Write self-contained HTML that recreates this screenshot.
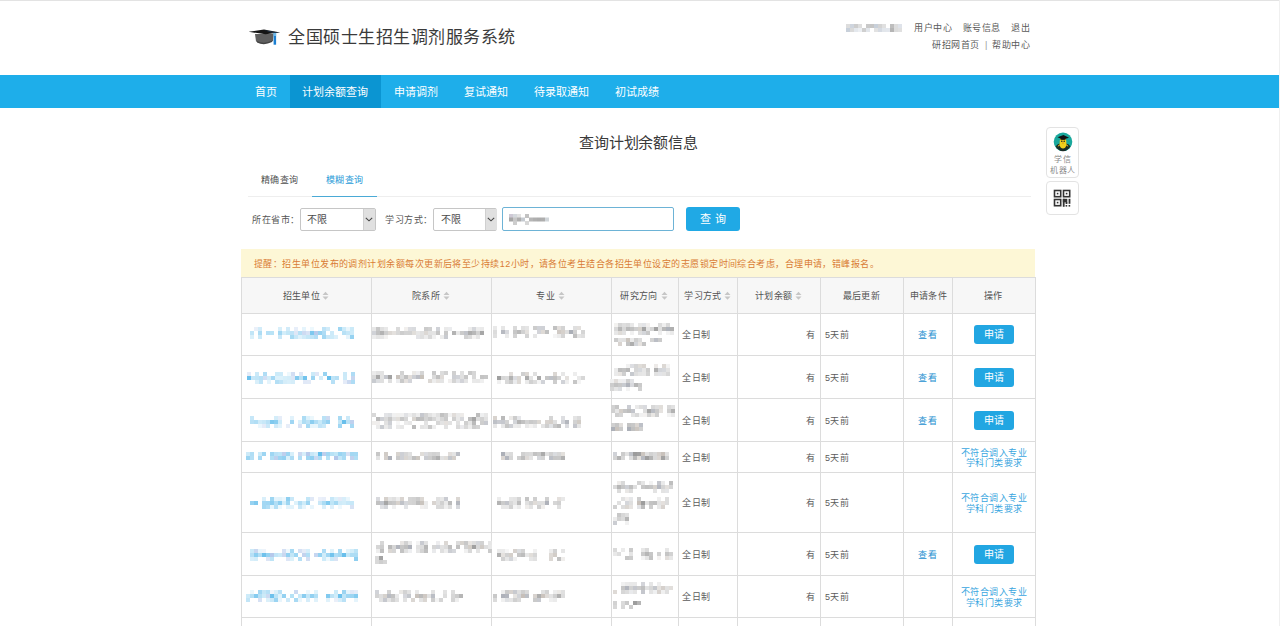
<!DOCTYPE html>
<html lang="zh-CN"><head><meta charset="utf-8">
<style>
html,body{margin:0;padding:0;}
body{width:1280px;height:626px;overflow:hidden;position:relative;background:#fff;font-family:"Liberation Sans",sans-serif;color:#333;}
.a{position:absolute;white-space:nowrap;}
.topline{left:0;top:0;width:1280px;height:1px;background:#e3e3e3;}
.rightline{left:1279px;top:0;width:1px;height:626px;background:#f0f0f0;}
.nav{left:0;top:75px;width:1279px;height:33px;background:#1eaeea;}
.nav-act{left:290px;top:75px;width:91px;height:33px;background:#0b95d2;}
.nt{top:87px;font-size:11px;line-height:11px;color:#fff;}
.hr{font-size:9px;letter-spacing:0.5px;line-height:10px;color:#5a5a5a;}
.blur{position:absolute;border-radius:1px;}
.tb{position:absolute;background:#dcdcdc;}
.th{font-size:9px;letter-spacing:0.4px;line-height:10px;color:#525252;}
.td{font-size:9px;letter-spacing:0.4px;line-height:10px;color:#5c5c5c;}
.btn{position:absolute;background:#22a6e2;border-radius:3px;color:#fff;font-size:10px;line-height:19px;text-align:center;}
.lnk{color:#2590d0;font-size:9px;letter-spacing:0.5px;line-height:10px;}
.sort{position:absolute;width:6px;height:9px;}
.m rect{width:4px;height:4px;}
.m{filter:blur(0.35px);}
</style></head>
<body>
<div class="a topline"></div>
<div class="a rightline"></div>

<!-- header -->
<svg class="a" style="left:248px;top:28px" width="34" height="18" viewBox="0 0 34 18">
  <path d="M7,6 L25.5,6 L25,13 Q16,17.5 8,13.5 Z" fill="#5f5f5f"/>
  <path d="M9,13 Q16,16.5 24.5,12.5 L24,14 Q16,18 9,14.5 Z" fill="#444"/>
  <polygon points="0.6,3.8 16,1.4 32.2,4.6 17.5,6.3" fill="#151515"/>
  <polygon points="16,2.2 31,4.6 26,5.2" fill="#2a4a6a" opacity=".6"/>
  <rect x="25.6" y="5" width="2.5" height="11.7" fill="#1b7fd2"/>
  <rect x="25.6" y="5" width="2.5" height="3" fill="#6fb8e8"/>
</svg>
<div class="a" style="left:288px;top:28.5px;font-size:17px;letter-spacing:0.5px;line-height:18px;color:#3a3a3a">全国硕士生招生调剂服务系统</div>

<svg class="a m" style="left:846px;top:24px" width="56" height="8"><rect x="0" y="0" fill="#dddddd"/><rect x="4" y="0" fill="#cfd5de"/><rect x="8" y="0" fill="#cdcdcd"/><rect x="12" y="0" fill="#dedede"/><rect x="20" y="0" fill="#c9c9c9"/><rect x="24" y="0" fill="#c6c6c6"/><rect x="28" y="0" fill="#c8d0da"/><rect x="32" y="0" fill="#d4d4d4"/><rect x="36" y="0" fill="#e0e0e0"/><rect x="44" y="0" fill="#bebebe"/><rect x="48" y="0" fill="#dddddd"/><rect x="52" y="0" fill="#dfe3ea"/><rect x="0" y="4" fill="#c8d0da"/><rect x="4" y="4" fill="#dadada"/><rect x="8" y="4" fill="#e4e8ed"/><rect x="12" y="4" fill="#eceff3"/><rect x="16" y="4" fill="#cfcfcf"/><rect x="20" y="4" fill="#e2e6eb"/><rect x="28" y="4" fill="#e2e2e2"/><rect x="32" y="4" fill="#d5dae2"/><rect x="36" y="4" fill="#e2e6eb"/><rect x="40" y="4" fill="#e3e7ed"/><rect x="44" y="4" fill="#b5b5b5"/><rect x="48" y="4" fill="#dcdcdc"/><rect x="52" y="4" fill="#e0e0e0"/></svg>
<div class="a hr" style="left:914px;top:23px">用户中心</div>
<div class="a hr" style="left:962.5px;top:23px">账号信息</div>
<div class="a hr" style="left:1011px;top:23px">退出</div>
<div class="a hr" style="left:932px;top:40px">研招网首页</div>
<div class="a hr" style="left:985px;top:40px;color:#999">|</div>
<div class="a hr" style="left:992px;top:40px">帮助中心</div>

<!-- nav -->
<div class="a nav"></div>
<div class="a nav-act"></div>
<div class="a nt" style="left:255px">首页</div>
<div class="a nt" style="left:302px">计划余额查询</div>
<div class="a nt" style="left:394px">申请调剂</div>
<div class="a nt" style="left:464px">复试通知</div>
<div class="a nt" style="left:534px">待录取通知</div>
<div class="a nt" style="left:615px">初试成绩</div>

<!-- title -->
<div class="a" style="left:579px;top:135px;font-size:15px;letter-spacing:-0.15px;line-height:15px;color:#3a3a3a">查询计划余额信息</div>

<!-- tabs -->
<div class="a" style="left:261px;top:174.5px;font-size:9px;letter-spacing:0.33px;line-height:10px;color:#505050">精确查询</div>
<div class="a" style="left:326px;top:174.5px;font-size:9px;letter-spacing:0.33px;line-height:10px;color:#2a9bd8">模糊查询</div>
<div class="a" style="left:248px;top:196px;width:783px;height:1px;background:#eee"></div>
<div class="a" style="left:312px;top:196px;width:65px;height:1px;background:#4aaad6"></div>

<!-- form -->
<div class="a" style="left:252px;top:215px;font-size:9px;letter-spacing:0.5px;line-height:10px;color:#555">所在省市：</div>
<div class="a" style="left:300px;top:208px;width:74px;height:21px;border:1px solid #c6c6c6;border-radius:2px;background:#fff"></div>
<div class="a" style="left:363px;top:209px;width:11px;height:21px;background:#e0e0e0;border-left:1px solid #d0d0d0"></div>
<svg class="a" style="left:365px;top:217px" width="8" height="5" viewBox="0 0 8 5"><polyline points="0.8,0.8 4,3.8 7.2,0.8" fill="none" stroke="#444" stroke-width="1.1"/></svg>
<div class="a" style="left:307px;top:215px;font-size:10px;line-height:10px;color:#4a4a4a">不限</div>
<div class="a" style="left:385px;top:215px;font-size:9px;letter-spacing:0.5px;line-height:10px;color:#555">学习方式：</div>
<div class="a" style="left:433px;top:208px;width:62px;height:21px;border:1px solid #c6c6c6;border-radius:2px;background:#fff"></div>
<div class="a" style="left:485px;top:209px;width:11px;height:21px;background:#e0e0e0;border-left:1px solid #d0d0d0"></div>
<svg class="a" style="left:487px;top:217px" width="8" height="5" viewBox="0 0 8 5"><polyline points="0.8,0.8 4,3.8 7.2,0.8" fill="none" stroke="#444" stroke-width="1.1"/></svg>
<div class="a" style="left:441px;top:215px;font-size:10px;line-height:10px;color:#4a4a4a">不限</div>
<div class="a" style="left:502px;top:207px;width:170px;height:22px;border:1px solid #6db3d6;border-radius:2px;background:#fff"></div>
<svg class="a m" style="left:509px;top:214px" width="40" height="11"><rect x="0" y="0.0" fill="#cec9d5"/><rect x="4" y="0.0" fill="#d4d9dd"/><rect x="8" y="0.0" fill="#e2e2e2"/><rect x="16" y="0.0" fill="#c2c2c2"/><rect x="0" y="3.5" fill="#a6a6a6"/><rect x="4" y="3.5" fill="#c7c7c7"/><rect x="8" y="3.5" fill="#aeaeae"/><rect x="12" y="3.5" fill="#c5cad0"/><rect x="20" y="3.5" fill="#b6b6b6"/><rect x="24" y="3.5" fill="#afafaf"/><rect x="28" y="3.5" fill="#acacac"/><rect x="32" y="3.5" fill="#aeaeae"/><rect x="36" y="3.5" fill="#d0d5d9"/><rect x="4" y="7.0" fill="#cdcdcd"/><rect x="16" y="7.0" fill="#d7d7d7"/></svg>
<div class="btn" style="left:686px;top:207px;width:54px;height:24px;line-height:24px;font-size:11px;background:#20a9e5">查 询</div>

<!-- notice -->
<div class="a" style="left:241px;top:249px;width:794px;height:28px;background:#fdf7d6"></div>
<div class="a" style="left:254px;top:259.5px;font-size:9px;letter-spacing:0.45px;line-height:9px;color:#d97b35">提醒：招生单位发布的调剂计划余额每次更新后将至少持续12小时，请各位考生结合各招生单位设定的志愿锁定时间综合考虑，合理申请，错峰报名。</div>

<!-- table -->
<div class="a" style="left:241px;top:277px;width:794px;height:36px;background:#f7f7f7"></div>
<div class="tb" style="left:241px;top:277px;width:1px;height:349px"></div>
<div class="tb" style="left:371px;top:277px;width:1px;height:349px"></div>
<div class="tb" style="left:491px;top:277px;width:1px;height:349px"></div>
<div class="tb" style="left:611px;top:277px;width:1px;height:349px"></div>
<div class="tb" style="left:678px;top:277px;width:1px;height:349px"></div>
<div class="tb" style="left:737px;top:277px;width:1px;height:349px"></div>
<div class="tb" style="left:820px;top:277px;width:1px;height:349px"></div>
<div class="tb" style="left:903px;top:277px;width:1px;height:349px"></div>
<div class="tb" style="left:952px;top:277px;width:1px;height:349px"></div>
<div class="tb" style="left:1035px;top:277px;width:1px;height:349px"></div>
<div class="tb" style="left:241px;top:277px;width:795px;height:1px"></div>
<div class="tb" style="left:241px;top:313px;width:795px;height:1px"></div>
<div class="tb" style="left:241px;top:355px;width:795px;height:1px"></div>
<div class="tb" style="left:241px;top:398px;width:795px;height:1px"></div>
<div class="tb" style="left:241px;top:441px;width:795px;height:1px"></div>
<div class="tb" style="left:241px;top:472px;width:795px;height:1px"></div>
<div class="tb" style="left:241px;top:532px;width:795px;height:1px"></div>
<div class="tb" style="left:241px;top:575px;width:795px;height:1px"></div>
<div class="tb" style="left:241px;top:617px;width:795px;height:1px"></div>
<div class="a th" style="left:282.7px;top:291px">招生单位</div>
<div class="a th" style="left:411.8px;top:291px">院系所</div>
<div class="a th" style="left:536.4px;top:291px">专业</div>
<div class="a th" style="left:620.3px;top:291px">研究方向</div>
<div class="a th" style="left:684.3px;top:291px">学习方式</div>
<div class="a th" style="left:754.9px;top:291px">计划余额</div>
<div class="a th" style="left:842.5px;top:291px">最后更新</div>
<div class="a th" style="left:909.6px;top:291px">申请条件</div>
<div class="a th" style="left:983.8px;top:291px">操作</div>
<svg class="a" style="left:322.0px;top:291px" width="7" height="10" viewBox="0 0 7 10"><polygon points="0.5,4 3.5,0.8 6.5,4" fill="#c6c6c6"/><polygon points="0.5,5.6 3.5,8.8 6.5,5.6" fill="#c6c6c6"/></svg>
<svg class="a" style="left:442.5px;top:291px" width="7" height="10" viewBox="0 0 7 10"><polygon points="0.5,4 3.5,0.8 6.5,4" fill="#c6c6c6"/><polygon points="0.5,5.6 3.5,8.8 6.5,5.6" fill="#c6c6c6"/></svg>
<svg class="a" style="left:557.5px;top:291px" width="7" height="10" viewBox="0 0 7 10"><polygon points="0.5,4 3.5,0.8 6.5,4" fill="#c6c6c6"/><polygon points="0.5,5.6 3.5,8.8 6.5,5.6" fill="#c6c6c6"/></svg>
<svg class="a" style="left:660.5px;top:291px" width="7" height="10" viewBox="0 0 7 10"><polygon points="0.5,4 3.5,0.8 6.5,4" fill="#c6c6c6"/><polygon points="0.5,5.6 3.5,8.8 6.5,5.6" fill="#c6c6c6"/></svg>
<svg class="a" style="left:724.0px;top:291px" width="7" height="10" viewBox="0 0 7 10"><polygon points="0.5,4 3.5,0.8 6.5,4" fill="#c6c6c6"/><polygon points="0.5,5.6 3.5,8.8 6.5,5.6" fill="#c6c6c6"/></svg>
<svg class="a" style="left:794.5px;top:291px" width="7" height="10" viewBox="0 0 7 10"><polygon points="0.5,4 3.5,0.8 6.5,4" fill="#c6c6c6"/><polygon points="0.5,5.6 3.5,8.8 6.5,5.6" fill="#c6c6c6"/></svg>
<svg class="a m" style="left:250px;top:327px" width="104" height="12"><rect x="4" y="0" fill="#eaf0f9"/><rect x="8" y="0" fill="#d2ecf9"/><rect x="28" y="0" fill="#d8effa"/><rect x="36" y="0" fill="#d1ebf9"/><rect x="44" y="0" fill="#e7eef9"/><rect x="52" y="0" fill="#e5f4fc"/><rect x="60" y="0" fill="#edf8fd"/><rect x="72" y="0" fill="#bee3f7"/><rect x="76" y="0" fill="#d0ebf9"/><rect x="88" y="0" fill="#9ed6f2"/><rect x="92" y="0" fill="#cdebf9"/><rect x="96" y="0" fill="#eaf6fc"/><rect x="100" y="0" fill="#cbeaf8"/><rect x="0" y="4" fill="#c1e5f7"/><rect x="8" y="4" fill="#addcf4"/><rect x="16" y="4" fill="#b6e0f6"/><rect x="20" y="4" fill="#b9e3f6"/><rect x="28" y="4" fill="#a3d8f3"/><rect x="32" y="4" fill="#d4eefa"/><rect x="36" y="4" fill="#c3e7f7"/><rect x="40" y="4" fill="#bfe3f7"/><rect x="44" y="4" fill="#dfe7f6"/><rect x="48" y="4" fill="#b7e0f6"/><rect x="52" y="4" fill="#cedbf2"/><rect x="56" y="4" fill="#d9e3f5"/><rect x="60" y="4" fill="#7ec8ee"/><rect x="64" y="4" fill="#b8caeb"/><rect x="68" y="4" fill="#97d2f1"/><rect x="72" y="4" fill="#aedcf5"/><rect x="80" y="4" fill="#cdeaf9"/><rect x="92" y="4" fill="#b8e1f6"/><rect x="96" y="4" fill="#c6e7f8"/><rect x="100" y="4" fill="#ceebf9"/><rect x="0" y="8" fill="#daf0fa"/><rect x="8" y="8" fill="#cbeaf8"/><rect x="28" y="8" fill="#c9e8f8"/><rect x="40" y="8" fill="#a7daf3"/><rect x="44" y="8" fill="#c9e8f8"/><rect x="48" y="8" fill="#e0f2fb"/><rect x="52" y="8" fill="#d1ebf9"/><rect x="56" y="8" fill="#c5e7f7"/><rect x="60" y="8" fill="#c0e4f7"/><rect x="64" y="8" fill="#b3def5"/><rect x="72" y="8" fill="#a4d8f3"/><rect x="76" y="8" fill="#cae8f8"/><rect x="80" y="8" fill="#cdebf9"/><rect x="84" y="8" fill="#dcf0fa"/><rect x="96" y="8" fill="#e5f4fc"/><rect x="100" y="8" fill="#96d2f1"/></svg>
<svg class="a m" style="left:372px;top:327px" width="112" height="12"><rect x="0" y="0" fill="#e7e7e7"/><rect x="4" y="0" fill="#c7c7c7"/><rect x="8" y="0" fill="#e0e0e0"/><rect x="12" y="0" fill="#e8e8e8"/><rect x="24" y="0" fill="#dadada"/><rect x="32" y="0" fill="#f1efed"/><rect x="36" y="0" fill="#dcdde1"/><rect x="40" y="0" fill="#d9dbde"/><rect x="52" y="0" fill="#cbcbcb"/><rect x="56" y="0" fill="#d0d0d0"/><rect x="64" y="0" fill="#d0d2d7"/><rect x="72" y="0" fill="#eaeaea"/><rect x="76" y="0" fill="#ebecee"/><rect x="96" y="0" fill="#ececec"/><rect x="100" y="0" fill="#d5d7db"/><rect x="104" y="0" fill="#ededed"/><rect x="108" y="0" fill="#eaeaea"/><rect x="0" y="4" fill="#d0d2d7"/><rect x="4" y="4" fill="#c1c1c1"/><rect x="8" y="4" fill="#b3b3b3"/><rect x="12" y="4" fill="#cecece"/><rect x="16" y="4" fill="#dcd8d4"/><rect x="20" y="4" fill="#e4e1de"/><rect x="24" y="4" fill="#d8d8d8"/><rect x="28" y="4" fill="#cdcdcd"/><rect x="32" y="4" fill="#d3d3d3"/><rect x="36" y="4" fill="#d2d2d2"/><rect x="40" y="4" fill="#e1deda"/><rect x="44" y="4" fill="#e7e7e7"/><rect x="48" y="4" fill="#e1e1e1"/><rect x="52" y="4" fill="#dcd8d4"/><rect x="56" y="4" fill="#e2e2e2"/><rect x="60" y="4" fill="#e4e4e4"/><rect x="64" y="4" fill="#c5c5c5"/><rect x="72" y="4" fill="#c9c9c9"/><rect x="80" y="4" fill="#b3b3b3"/><rect x="84" y="4" fill="#e8e8e8"/><rect x="88" y="4" fill="#cbcbcb"/><rect x="92" y="4" fill="#c2c4ca"/><rect x="96" y="4" fill="#adadad"/><rect x="100" y="4" fill="#b8b8b8"/><rect x="104" y="4" fill="#d2d2d2"/><rect x="108" y="4" fill="#a7a7a7"/><rect x="0" y="8" fill="#ececec"/><rect x="4" y="8" fill="#e4e4e4"/><rect x="8" y="8" fill="#e6e6e6"/><rect x="12" y="8" fill="#f3f2f1"/><rect x="44" y="8" fill="#e3e4e7"/><rect x="48" y="8" fill="#dfdfdf"/><rect x="52" y="8" fill="#ececec"/><rect x="56" y="8" fill="#d9d9d9"/><rect x="60" y="8" fill="#f1f1f1"/><rect x="68" y="8" fill="#ececec"/><rect x="72" y="8" fill="#c9cbd0"/><rect x="92" y="8" fill="#d2d2d2"/><rect x="96" y="8" fill="#dbdbdb"/><rect x="100" y="8" fill="#f4f3f2"/><rect x="104" y="8" fill="#e6e6e6"/></svg>
<svg class="a m" style="left:493px;top:326px" width="92" height="12"><rect x="0" y="0" fill="#e9e9e9"/><rect x="8" y="0" fill="#e6e6e6"/><rect x="20" y="0" fill="#dadada"/><rect x="28" y="0" fill="#e1e1e1"/><rect x="32" y="0" fill="#e5e5e5"/><rect x="40" y="0" fill="#cccccc"/><rect x="44" y="0" fill="#d0d2d7"/><rect x="48" y="0" fill="#cfd1d6"/><rect x="60" y="0" fill="#c1c1c1"/><rect x="64" y="0" fill="#e3dfdc"/><rect x="68" y="0" fill="#d3d3d3"/><rect x="80" y="0" fill="#dfdfdf"/><rect x="84" y="0" fill="#e3e0dd"/><rect x="0" y="4" fill="#dcdcdc"/><rect x="8" y="4" fill="#b7bac1"/><rect x="12" y="4" fill="#d8d9dd"/><rect x="20" y="4" fill="#c7c7c7"/><rect x="24" y="4" fill="#bababa"/><rect x="28" y="4" fill="#d1d1d1"/><rect x="32" y="4" fill="#e4e1de"/><rect x="44" y="4" fill="#d3d4d9"/><rect x="48" y="4" fill="#dedad6"/><rect x="52" y="4" fill="#c0c0c0"/><rect x="64" y="4" fill="#d0cac5"/><rect x="68" y="4" fill="#d6d1cc"/><rect x="72" y="4" fill="#dfdfdf"/><rect x="76" y="4" fill="#abafb7"/><rect x="80" y="4" fill="#d1d1d1"/><rect x="88" y="4" fill="#d5d5d5"/><rect x="0" y="8" fill="#e0e0e0"/><rect x="12" y="8" fill="#ebebeb"/><rect x="20" y="8" fill="#d3d3d3"/><rect x="32" y="8" fill="#d4d4d4"/><rect x="40" y="8" fill="#e6e6e6"/><rect x="60" y="8" fill="#f4f4f4"/><rect x="64" y="8" fill="#ececec"/><rect x="68" y="8" fill="#d5d5d5"/><rect x="80" y="8" fill="#c0c0c0"/><rect x="84" y="8" fill="#e5e5e5"/><rect x="88" y="8" fill="#dfdfdf"/></svg>
<svg class="a m" style="left:614px;top:323px" width="60" height="12"><rect x="0" y="0" fill="#f3f2f0"/><rect x="4" y="0" fill="#d6d6d6"/><rect x="8" y="0" fill="#dedede"/><rect x="12" y="0" fill="#d9d9d9"/><rect x="16" y="0" fill="#e8e8e8"/><rect x="24" y="0" fill="#e7e7e7"/><rect x="28" y="0" fill="#e3e4e7"/><rect x="32" y="0" fill="#f1efee"/><rect x="44" y="0" fill="#dcdcdc"/><rect x="48" y="0" fill="#efefef"/><rect x="52" y="0" fill="#d9d9d9"/><rect x="0" y="4" fill="#d9d9d9"/><rect x="4" y="4" fill="#b7b7b7"/><rect x="8" y="4" fill="#d7d7d7"/><rect x="12" y="4" fill="#bababa"/><rect x="16" y="4" fill="#c2c2c2"/><rect x="20" y="4" fill="#cfcfcf"/><rect x="24" y="4" fill="#d5d1cc"/><rect x="28" y="4" fill="#a4a4a4"/><rect x="32" y="4" fill="#e5e5e5"/><rect x="36" y="4" fill="#d5d5d5"/><rect x="40" y="4" fill="#a3a3a3"/><rect x="44" y="4" fill="#e0e0e0"/><rect x="48" y="4" fill="#b9b9b9"/><rect x="52" y="4" fill="#aeb2ba"/><rect x="56" y="4" fill="#b0b0b0"/><rect x="0" y="8" fill="#e7e7e7"/><rect x="4" y="8" fill="#dfdcd8"/><rect x="8" y="8" fill="#e2e2e2"/><rect x="16" y="8" fill="#f1f1f1"/><rect x="24" y="8" fill="#dedede"/><rect x="28" y="8" fill="#d4d6da"/><rect x="32" y="8" fill="#c9c9c9"/><rect x="44" y="8" fill="#ededed"/><rect x="52" y="8" fill="#f3f3f3"/><rect x="56" y="8" fill="#eaeaea"/></svg>
<svg class="a m" style="left:614px;top:338px" width="48" height="8"><rect x="0" y="0" fill="#cccccc"/><rect x="4" y="0" fill="#e3e3e3"/><rect x="8" y="0" fill="#e2e2e2"/><rect x="12" y="0" fill="#cbc5bf"/><rect x="16" y="0" fill="#eaeaea"/><rect x="20" y="0" fill="#cfcfcf"/><rect x="24" y="0" fill="#dcdcdc"/><rect x="36" y="0" fill="#d3d3d3"/><rect x="40" y="0" fill="#bbbec5"/><rect x="44" y="0" fill="#cbcbcb"/><rect x="4" y="4" fill="#d9d4d0"/><rect x="12" y="4" fill="#c3c3c3"/><rect x="16" y="4" fill="#aeaeae"/><rect x="20" y="4" fill="#d3d5d9"/><rect x="24" y="4" fill="#e6e3e0"/><rect x="28" y="4" fill="#c5c5c5"/></svg>
<div class="a td" style="left:682.4px;top:330.0px">全日制</div>
<div class="a td" style="left:806px;top:330.0px">有</div>
<div class="a td" style="left:825px;top:330.0px">5天前</div>
<div class="a lnk" style="left:918px;top:330.0px">查看</div>
<div class="btn" style="left:974px;top:325.0px;width:40px;height:19px">申请</div>
<svg class="a m" style="left:247px;top:372px" width="108" height="12"><rect x="0" y="0" fill="#e4ebf7"/><rect x="8" y="0" fill="#cae9f8"/><rect x="16" y="0" fill="#b0ddf5"/><rect x="28" y="0" fill="#ccebf9"/><rect x="32" y="0" fill="#ceebf9"/><rect x="40" y="0" fill="#edf8fd"/><rect x="44" y="0" fill="#d2def3"/><rect x="52" y="0" fill="#dee7f6"/><rect x="64" y="0" fill="#cdeaf8"/><rect x="68" y="0" fill="#dee6f6"/><rect x="76" y="0" fill="#97d3f1"/><rect x="96" y="0" fill="#cbe9f8"/><rect x="104" y="0" fill="#aedcf5"/><rect x="0" y="4" fill="#6cc0ec"/><rect x="4" y="4" fill="#c6e7f8"/><rect x="8" y="4" fill="#c1e5f7"/><rect x="12" y="4" fill="#b9e1f6"/><rect x="16" y="4" fill="#d2def3"/><rect x="20" y="4" fill="#d3edf9"/><rect x="24" y="4" fill="#a6d9f4"/><rect x="28" y="4" fill="#dcf1fb"/><rect x="32" y="4" fill="#dcf1fb"/><rect x="36" y="4" fill="#d6effa"/><rect x="40" y="4" fill="#d4edf9"/><rect x="44" y="4" fill="#dde6f6"/><rect x="48" y="4" fill="#85cbef"/><rect x="52" y="4" fill="#bbe4f6"/><rect x="56" y="4" fill="#73c3ed"/><rect x="64" y="4" fill="#9ed5f2"/><rect x="72" y="4" fill="#d4edf9"/><rect x="80" y="4" fill="#66beeb"/><rect x="84" y="4" fill="#bfe4f7"/><rect x="88" y="4" fill="#b5dff5"/><rect x="96" y="4" fill="#cceaf8"/><rect x="104" y="4" fill="#c6d5ef"/><rect x="8" y="8" fill="#d9effa"/><rect x="12" y="8" fill="#bfe4f7"/><rect x="20" y="8" fill="#e4f4fc"/><rect x="28" y="8" fill="#b4dff5"/><rect x="32" y="8" fill="#c0e4f7"/><rect x="36" y="8" fill="#d5edf9"/><rect x="40" y="8" fill="#d9effa"/><rect x="44" y="8" fill="#d5edf9"/><rect x="56" y="8" fill="#e1e9f7"/><rect x="60" y="8" fill="#e2eaf7"/><rect x="84" y="8" fill="#b7e0f6"/><rect x="96" y="8" fill="#e4ebf8"/><rect x="100" y="8" fill="#ccdaf1"/><rect x="104" y="8" fill="#aedcf5"/></svg>
<svg class="a m" style="left:372px;top:371px" width="120" height="12"><rect x="0" y="0" fill="#ebebeb"/><rect x="4" y="0" fill="#e3e3e3"/><rect x="8" y="0" fill="#e3e3e3"/><rect x="28" y="0" fill="#d3d3d3"/><rect x="40" y="0" fill="#ebe9e6"/><rect x="44" y="0" fill="#eeeef0"/><rect x="48" y="0" fill="#d5d5d5"/><rect x="60" y="0" fill="#c9c9c9"/><rect x="68" y="0" fill="#dcdcdc"/><rect x="72" y="0" fill="#d2d2d2"/><rect x="80" y="0" fill="#d0d0d0"/><rect x="88" y="0" fill="#e0e0e0"/><rect x="96" y="0" fill="#c9c9c9"/><rect x="100" y="0" fill="#d6d6d6"/><rect x="0" y="4" fill="#d9d9d9"/><rect x="4" y="4" fill="#a8a8a8"/><rect x="8" y="4" fill="#e3e3e3"/><rect x="12" y="4" fill="#c6c8ce"/><rect x="16" y="4" fill="#a2a2a2"/><rect x="24" y="4" fill="#c9c3bd"/><rect x="28" y="4" fill="#dbdbdb"/><rect x="32" y="4" fill="#c1c1c1"/><rect x="36" y="4" fill="#e1ddda"/><rect x="40" y="4" fill="#ced0d5"/><rect x="44" y="4" fill="#bdbfc6"/><rect x="48" y="4" fill="#c8c2bb"/><rect x="60" y="4" fill="#dbdbdb"/><rect x="64" y="4" fill="#c1c1c1"/><rect x="68" y="4" fill="#dfdbd8"/><rect x="80" y="4" fill="#cdcfd4"/><rect x="84" y="4" fill="#d1d3d8"/><rect x="88" y="4" fill="#e0e0e0"/><rect x="92" y="4" fill="#c7c7c7"/><rect x="100" y="4" fill="#d8d8d8"/><rect x="108" y="4" fill="#c4c4c4"/><rect x="112" y="4" fill="#c7c7c7"/><rect x="0" y="8" fill="#c8cbd0"/><rect x="4" y="8" fill="#dcdee1"/><rect x="8" y="8" fill="#e0e0e0"/><rect x="16" y="8" fill="#dfdfdf"/><rect x="24" y="8" fill="#ebecee"/><rect x="28" y="8" fill="#c9c9c9"/><rect x="32" y="8" fill="#e5e1de"/><rect x="36" y="8" fill="#d4d5da"/><rect x="56" y="8" fill="#dcd8d4"/><rect x="60" y="8" fill="#ededed"/><rect x="64" y="8" fill="#e6e3e0"/><rect x="68" y="8" fill="#e4e4e4"/><rect x="76" y="8" fill="#f1efee"/><rect x="80" y="8" fill="#d4d4d4"/><rect x="84" y="8" fill="#e4e5e8"/><rect x="88" y="8" fill="#d2d3d8"/><rect x="92" y="8" fill="#e4e4e4"/><rect x="100" y="8" fill="#e9e9e9"/><rect x="104" y="8" fill="#e8e8e8"/><rect x="108" y="8" fill="#efefef"/></svg>
<svg class="a m" style="left:497px;top:372px" width="88" height="12"><rect x="12" y="0" fill="#e1ddda"/><rect x="24" y="0" fill="#d0d0d0"/><rect x="28" y="0" fill="#dbd7d3"/><rect x="36" y="0" fill="#e0e0e0"/><rect x="56" y="0" fill="#dbd7d3"/><rect x="64" y="0" fill="#e7e7e7"/><rect x="76" y="0" fill="#ededed"/><rect x="0" y="4" fill="#a0a0a0"/><rect x="4" y="4" fill="#d7d7d7"/><rect x="8" y="4" fill="#dbdbdb"/><rect x="12" y="4" fill="#b2b2b2"/><rect x="16" y="4" fill="#dbdce0"/><rect x="20" y="4" fill="#dbd7d3"/><rect x="28" y="4" fill="#acacac"/><rect x="32" y="4" fill="#e4e4e4"/><rect x="40" y="4" fill="#a9a9a9"/><rect x="48" y="4" fill="#c6c6c6"/><rect x="52" y="4" fill="#bfc2c8"/><rect x="56" y="4" fill="#c1c1c1"/><rect x="60" y="4" fill="#d3d3d3"/><rect x="68" y="4" fill="#e4e1de"/><rect x="80" y="4" fill="#e9e9e9"/><rect x="84" y="4" fill="#d7d7d7"/><rect x="0" y="8" fill="#f0f0f0"/><rect x="8" y="8" fill="#d9d9d9"/><rect x="12" y="8" fill="#cbcbcb"/><rect x="16" y="8" fill="#eaebed"/><rect x="20" y="8" fill="#ddd9d5"/><rect x="28" y="8" fill="#eaeaea"/><rect x="32" y="8" fill="#d1d1d1"/><rect x="36" y="8" fill="#dcdcdc"/><rect x="40" y="8" fill="#f4f4f4"/><rect x="44" y="8" fill="#d1d3d8"/><rect x="56" y="8" fill="#cdcdcd"/><rect x="64" y="8" fill="#d0d2d7"/><rect x="68" y="8" fill="#eeeeee"/><rect x="76" y="8" fill="#c6c6c6"/><rect x="80" y="8" fill="#f4f4f4"/></svg>
<svg class="a m" style="left:614px;top:364px" width="56" height="12"><rect x="12" y="0" fill="#f1f1f1"/><rect x="16" y="0" fill="#dddee2"/><rect x="20" y="0" fill="#d5d5d5"/><rect x="24" y="0" fill="#e0ddd9"/><rect x="28" y="0" fill="#dad6d2"/><rect x="40" y="0" fill="#edeae8"/><rect x="48" y="0" fill="#dcd8d4"/><rect x="52" y="0" fill="#f3f3f3"/><rect x="0" y="4" fill="#ebebeb"/><rect x="4" y="4" fill="#bebebe"/><rect x="8" y="4" fill="#c3c3c3"/><rect x="12" y="4" fill="#b9b9b9"/><rect x="20" y="4" fill="#d6d6d6"/><rect x="24" y="4" fill="#d7d9dd"/><rect x="28" y="4" fill="#e6e6e6"/><rect x="32" y="4" fill="#cdcdcd"/><rect x="40" y="4" fill="#b1b1b1"/><rect x="44" y="4" fill="#d3d5d9"/><rect x="48" y="4" fill="#d6d8dc"/><rect x="52" y="4" fill="#e3e3e3"/><rect x="0" y="8" fill="#eaeaea"/><rect x="4" y="8" fill="#e8e5e2"/><rect x="8" y="8" fill="#cfcfcf"/><rect x="16" y="8" fill="#c6c9ce"/><rect x="20" y="8" fill="#dedede"/><rect x="24" y="8" fill="#e5e5e5"/><rect x="28" y="8" fill="#e7e7e7"/><rect x="32" y="8" fill="#d2d2d2"/><rect x="40" y="8" fill="#e2e2e2"/><rect x="44" y="8" fill="#e3e4e7"/><rect x="48" y="8" fill="#e3e3e3"/><rect x="52" y="8" fill="#d7d7d7"/></svg>
<svg class="a m" style="left:610px;top:379px" width="32" height="12"><rect x="0" y="0" fill="#efefef"/><rect x="4" y="0" fill="#e1ddda"/><rect x="8" y="0" fill="#efefef"/><rect x="12" y="0" fill="#eeeef0"/><rect x="16" y="0" fill="#cfcfcf"/><rect x="20" y="0" fill="#e1e2e5"/><rect x="0" y="4" fill="#cccccc"/><rect x="4" y="4" fill="#c2c2c2"/><rect x="8" y="4" fill="#c8c8c8"/><rect x="12" y="4" fill="#c8cbd0"/><rect x="16" y="4" fill="#b0b3bb"/><rect x="20" y="4" fill="#d8d9dd"/><rect x="24" y="4" fill="#b6b6b6"/><rect x="28" y="4" fill="#cacaca"/><rect x="0" y="8" fill="#d6d6d6"/><rect x="4" y="8" fill="#e5e5e5"/><rect x="8" y="8" fill="#dbdde0"/><rect x="16" y="8" fill="#f3f3f3"/><rect x="28" y="8" fill="#d1d1d1"/></svg>
<div class="a td" style="left:682.4px;top:372.5px">全日制</div>
<div class="a td" style="left:806px;top:372.5px">有</div>
<div class="a td" style="left:825px;top:372.5px">5天前</div>
<div class="a lnk" style="left:918px;top:372.5px">查看</div>
<div class="btn" style="left:974px;top:367.5px;width:40px;height:19px">申请</div>
<svg class="a m" style="left:250px;top:416px" width="104" height="12"><rect x="0" y="0" fill="#c6e7f8"/><rect x="24" y="0" fill="#d4edf9"/><rect x="28" y="0" fill="#e6edf8"/><rect x="40" y="0" fill="#e1f2fb"/><rect x="52" y="0" fill="#acdcf4"/><rect x="56" y="0" fill="#dcf1fb"/><rect x="60" y="0" fill="#ebf7fc"/><rect x="72" y="0" fill="#bae2f6"/><rect x="76" y="0" fill="#ccdaf1"/><rect x="88" y="0" fill="#a8daf3"/><rect x="96" y="0" fill="#cbe9f8"/><rect x="0" y="4" fill="#b9e1f6"/><rect x="4" y="4" fill="#b1def5"/><rect x="8" y="4" fill="#cfebf9"/><rect x="12" y="4" fill="#c8e8f8"/><rect x="16" y="4" fill="#b9e1f6"/><rect x="20" y="4" fill="#80c9ee"/><rect x="24" y="4" fill="#8bcef0"/><rect x="28" y="4" fill="#ceebf9"/><rect x="40" y="4" fill="#a0d6f3"/><rect x="48" y="4" fill="#dcf1fb"/><rect x="52" y="4" fill="#aeddf4"/><rect x="56" y="4" fill="#bce2f6"/><rect x="60" y="4" fill="#8ccef0"/><rect x="64" y="4" fill="#b0ddf5"/><rect x="68" y="4" fill="#c8e9f8"/><rect x="72" y="4" fill="#abdbf4"/><rect x="76" y="4" fill="#95d1f1"/><rect x="88" y="4" fill="#c2e6f7"/><rect x="92" y="4" fill="#68bfeb"/><rect x="96" y="4" fill="#bbe2f6"/><rect x="100" y="4" fill="#c0d1ee"/><rect x="8" y="8" fill="#ebf7fd"/><rect x="12" y="8" fill="#e4ebf8"/><rect x="16" y="8" fill="#cae8f8"/><rect x="24" y="8" fill="#d1ebf9"/><rect x="28" y="8" fill="#e2f3fb"/><rect x="36" y="8" fill="#e6edf8"/><rect x="48" y="8" fill="#d7e1f4"/><rect x="56" y="8" fill="#a8daf4"/><rect x="60" y="8" fill="#e6f5fc"/><rect x="64" y="8" fill="#e8f6fc"/><rect x="68" y="8" fill="#c1e4f7"/><rect x="72" y="8" fill="#cae9f8"/><rect x="88" y="8" fill="#a1d7f3"/><rect x="100" y="8" fill="#a7d9f4"/></svg>
<svg class="a m" style="left:372px;top:413px" width="116" height="16"><rect x="0" y="0" fill="#d8d8d8"/><rect x="12" y="0" fill="#e3e4e7"/><rect x="16" y="0" fill="#dee0e3"/><rect x="20" y="0" fill="#f1f1f1"/><rect x="24" y="0" fill="#f1f0ee"/><rect x="28" y="0" fill="#f1f1f1"/><rect x="32" y="0" fill="#e1e2e5"/><rect x="36" y="0" fill="#ededed"/><rect x="40" y="0" fill="#e1e1e1"/><rect x="44" y="0" fill="#ededed"/><rect x="48" y="0" fill="#c6c8ce"/><rect x="52" y="0" fill="#d3d3d3"/><rect x="56" y="0" fill="#e2e2e2"/><rect x="60" y="0" fill="#ececec"/><rect x="64" y="0" fill="#e1e1e1"/><rect x="68" y="0" fill="#c1c1c1"/><rect x="72" y="0" fill="#cccccc"/><rect x="76" y="0" fill="#f1f1f1"/><rect x="80" y="0" fill="#e1ddda"/><rect x="84" y="0" fill="#e9e9e9"/><rect x="88" y="0" fill="#edebe9"/><rect x="104" y="0" fill="#bebebe"/><rect x="108" y="0" fill="#eeeff0"/><rect x="112" y="0" fill="#e7e7e7"/><rect x="4" y="4" fill="#bababa"/><rect x="8" y="4" fill="#ced0d5"/><rect x="12" y="4" fill="#dadada"/><rect x="16" y="4" fill="#c7c7c7"/><rect x="20" y="4" fill="#e1e1e1"/><rect x="24" y="4" fill="#e2dfdb"/><rect x="28" y="4" fill="#c8c8c8"/><rect x="32" y="4" fill="#d6d6d6"/><rect x="40" y="4" fill="#dad6d1"/><rect x="44" y="4" fill="#bcbcbc"/><rect x="48" y="4" fill="#c0c0c0"/><rect x="52" y="4" fill="#d4d4d4"/><rect x="56" y="4" fill="#c8c8c8"/><rect x="60" y="4" fill="#d7d7d7"/><rect x="64" y="4" fill="#e7e7e7"/><rect x="68" y="4" fill="#d7d7d7"/><rect x="72" y="4" fill="#cacaca"/><rect x="80" y="4" fill="#d0d0d0"/><rect x="84" y="4" fill="#e9e9e9"/><rect x="88" y="4" fill="#d7d8dc"/><rect x="96" y="4" fill="#bebebe"/><rect x="100" y="4" fill="#a5a5a5"/><rect x="104" y="4" fill="#dddddd"/><rect x="108" y="4" fill="#d1d1d1"/><rect x="112" y="4" fill="#e1e1e1"/><rect x="0" y="8" fill="#f0eeec"/><rect x="4" y="8" fill="#f0eeed"/><rect x="12" y="8" fill="#e2e2e2"/><rect x="16" y="8" fill="#cdcfd4"/><rect x="24" y="8" fill="#f6f6f6"/><rect x="32" y="8" fill="#ebebeb"/><rect x="36" y="8" fill="#e7e7e7"/><rect x="52" y="8" fill="#e3e3e3"/><rect x="64" y="8" fill="#d6d6d6"/><rect x="68" y="8" fill="#e3e3e3"/><rect x="72" y="8" fill="#e5e1de"/><rect x="76" y="8" fill="#e2e2e2"/><rect x="84" y="8" fill="#e1e1e1"/><rect x="92" y="8" fill="#d0d0d0"/><rect x="96" y="8" fill="#e5e5e5"/><rect x="100" y="8" fill="#bababa"/><rect x="108" y="8" fill="#cecece"/><rect x="112" y="8" fill="#c7c9cf"/><rect x="4" y="12" fill="#ebebeb"/><rect x="8" y="12" fill="#c9ccd1"/><rect x="12" y="12" fill="#eaeaea"/><rect x="16" y="12" fill="#dadcdf"/><rect x="24" y="12" fill="#ebebeb"/><rect x="28" y="12" fill="#e7e7e7"/><rect x="40" y="12" fill="#bbbbbb"/><rect x="48" y="12" fill="#e3e3e3"/><rect x="52" y="12" fill="#e7e7e7"/><rect x="56" y="12" fill="#c8c8c8"/><rect x="60" y="12" fill="#ededed"/><rect x="72" y="12" fill="#e3e3e3"/><rect x="84" y="12" fill="#dadada"/><rect x="88" y="12" fill="#eaeaed"/><rect x="92" y="12" fill="#d9d9d9"/><rect x="96" y="12" fill="#ededed"/><rect x="100" y="12" fill="#cecece"/><rect x="104" y="12" fill="#d4d4d4"/></svg>
<svg class="a m" style="left:493px;top:416px" width="88" height="12"><rect x="0" y="0" fill="#d8d3ce"/><rect x="8" y="0" fill="#bababa"/><rect x="16" y="0" fill="#eceae8"/><rect x="20" y="0" fill="#cccccc"/><rect x="24" y="0" fill="#e5e6e9"/><rect x="56" y="0" fill="#d5d5d5"/><rect x="68" y="0" fill="#dddee1"/><rect x="80" y="0" fill="#e4e4e4"/><rect x="84" y="0" fill="#dbdbdb"/><rect x="0" y="4" fill="#bec1c7"/><rect x="4" y="4" fill="#c9cbd1"/><rect x="8" y="4" fill="#c6c8ce"/><rect x="12" y="4" fill="#d3d3d3"/><rect x="20" y="4" fill="#d3d5d9"/><rect x="24" y="4" fill="#b4b4b4"/><rect x="28" y="4" fill="#c1c1c1"/><rect x="32" y="4" fill="#d2d2d2"/><rect x="36" y="4" fill="#c9c9c9"/><rect x="40" y="4" fill="#cdcdcd"/><rect x="44" y="4" fill="#dbd7d2"/><rect x="52" y="4" fill="#d8d3cf"/><rect x="56" y="4" fill="#d5d0cb"/><rect x="60" y="4" fill="#dfdfdf"/><rect x="68" y="4" fill="#d2d4d9"/><rect x="72" y="4" fill="#b4b7be"/><rect x="80" y="4" fill="#d2d2d2"/><rect x="84" y="4" fill="#d1ccc6"/><rect x="0" y="8" fill="#e7e7e7"/><rect x="8" y="8" fill="#e8e8e8"/><rect x="12" y="8" fill="#c6c6c6"/><rect x="16" y="8" fill="#cdcfd4"/><rect x="20" y="8" fill="#ededed"/><rect x="24" y="8" fill="#eaeaea"/><rect x="32" y="8" fill="#e9e9e9"/><rect x="36" y="8" fill="#f4f3f2"/><rect x="40" y="8" fill="#eaeaea"/><rect x="48" y="8" fill="#e3e3e3"/><rect x="52" y="8" fill="#cfcfcf"/><rect x="56" y="8" fill="#e1e3e6"/><rect x="60" y="8" fill="#c8c8c8"/><rect x="64" y="8" fill="#bbbbbb"/><rect x="72" y="8" fill="#dadbdf"/><rect x="80" y="8" fill="#c4c6cc"/><rect x="84" y="8" fill="#e5e5e5"/></svg>
<svg class="a m" style="left:611px;top:405px" width="64" height="12"><rect x="0" y="0" fill="#d2d2d2"/><rect x="4" y="0" fill="#c6c6c6"/><rect x="16" y="0" fill="#cbcdd3"/><rect x="24" y="0" fill="#eaeaea"/><rect x="28" y="0" fill="#dedede"/><rect x="32" y="0" fill="#d9dade"/><rect x="40" y="0" fill="#d8d8d8"/><rect x="44" y="0" fill="#dfdfdf"/><rect x="48" y="0" fill="#e1deda"/><rect x="56" y="0" fill="#d9d9d9"/><rect x="60" y="0" fill="#e1e1e1"/><rect x="0" y="4" fill="#d0d0d0"/><rect x="4" y="4" fill="#e6e6e6"/><rect x="8" y="4" fill="#d3cec9"/><rect x="12" y="4" fill="#c5c5c5"/><rect x="16" y="4" fill="#bebebe"/><rect x="20" y="4" fill="#c3c5cb"/><rect x="32" y="4" fill="#dddddd"/><rect x="36" y="4" fill="#a7a7a7"/><rect x="40" y="4" fill="#babdc4"/><rect x="44" y="4" fill="#cacaca"/><rect x="48" y="4" fill="#e6e3e0"/><rect x="56" y="4" fill="#cfcfcf"/><rect x="60" y="4" fill="#b2b2b2"/><rect x="4" y="8" fill="#cfcfcf"/><rect x="8" y="8" fill="#d6d6d6"/><rect x="20" y="8" fill="#e4e4e4"/><rect x="24" y="8" fill="#d8d8d8"/><rect x="28" y="8" fill="#f1f1f1"/><rect x="32" y="8" fill="#f3f1f0"/><rect x="36" y="8" fill="#d2d2d2"/><rect x="40" y="8" fill="#e8e6e3"/><rect x="44" y="8" fill="#cfcfcf"/><rect x="56" y="8" fill="#f3f3f3"/><rect x="60" y="8" fill="#e8e8e8"/></svg>
<svg class="a m" style="left:611px;top:423px" width="32" height="8"><rect x="0" y="0" fill="#d0d0d0"/><rect x="4" y="0" fill="#c6c6c6"/><rect x="8" y="0" fill="#e1dedb"/><rect x="16" y="0" fill="#c4c4c4"/><rect x="20" y="0" fill="#c8c8c8"/><rect x="24" y="0" fill="#dbd6d2"/><rect x="28" y="0" fill="#bdc0c7"/><rect x="0" y="4" fill="#adb1b9"/><rect x="4" y="4" fill="#c9c3bd"/><rect x="8" y="4" fill="#cacaca"/><rect x="16" y="4" fill="#abafb7"/><rect x="20" y="4" fill="#c1c1c1"/><rect x="24" y="4" fill="#cdc7c1"/><rect x="28" y="4" fill="#d0d0d0"/></svg>
<div class="a td" style="left:682.4px;top:415.5px">全日制</div>
<div class="a td" style="left:806px;top:415.5px">有</div>
<div class="a td" style="left:825px;top:415.5px">5天前</div>
<div class="a lnk" style="left:918px;top:415.5px">查看</div>
<div class="btn" style="left:974px;top:410.5px;width:40px;height:19px">申请</div>
<svg class="a m" style="left:246px;top:452px" width="112" height="8"><rect x="0" y="0" fill="#cdeaf8"/><rect x="4" y="0" fill="#b1def5"/><rect x="12" y="0" fill="#ccebf9"/><rect x="16" y="0" fill="#9dd5f2"/><rect x="24" y="0" fill="#9fd6f3"/><rect x="28" y="0" fill="#b9e1f6"/><rect x="32" y="0" fill="#bee4f7"/><rect x="36" y="0" fill="#becfed"/><rect x="40" y="0" fill="#9dd5f2"/><rect x="44" y="0" fill="#d7effa"/><rect x="52" y="0" fill="#cbd9f1"/><rect x="56" y="0" fill="#d7eefa"/><rect x="60" y="0" fill="#b7caeb"/><rect x="64" y="0" fill="#c8e7f8"/><rect x="68" y="0" fill="#d5edf9"/><rect x="72" y="0" fill="#66beeb"/><rect x="76" y="0" fill="#bdcfed"/><rect x="80" y="0" fill="#a2d7f3"/><rect x="84" y="0" fill="#b7e2f6"/><rect x="88" y="0" fill="#c2e7f7"/><rect x="92" y="0" fill="#9ad4f2"/><rect x="96" y="0" fill="#a6d9f3"/><rect x="100" y="0" fill="#d7e1f4"/><rect x="104" y="0" fill="#a3d8f3"/><rect x="108" y="0" fill="#a5d9f3"/><rect x="0" y="4" fill="#9cd5f2"/><rect x="4" y="4" fill="#b5dff5"/><rect x="12" y="4" fill="#a8daf4"/><rect x="24" y="4" fill="#b2dff5"/><rect x="28" y="4" fill="#bfd0ed"/><rect x="32" y="4" fill="#9dd5f2"/><rect x="36" y="4" fill="#94d1f1"/><rect x="40" y="4" fill="#daf0fa"/><rect x="44" y="4" fill="#aedcf4"/><rect x="52" y="4" fill="#b1def5"/><rect x="60" y="4" fill="#a0d6f2"/><rect x="64" y="4" fill="#92d1f1"/><rect x="68" y="4" fill="#cbd9f1"/><rect x="72" y="4" fill="#addcf4"/><rect x="80" y="4" fill="#b6e2f6"/><rect x="88" y="4" fill="#b3c7ea"/><rect x="92" y="4" fill="#c4e7f8"/><rect x="96" y="4" fill="#aadbf4"/><rect x="104" y="4" fill="#c2d2ee"/><rect x="108" y="4" fill="#b1dff5"/></svg>
<svg class="a m" style="left:376px;top:452px" width="84" height="8"><rect x="0" y="0" fill="#c7c7c7"/><rect x="8" y="0" fill="#d1ccc7"/><rect x="20" y="0" fill="#d8d4cf"/><rect x="24" y="0" fill="#ced0d5"/><rect x="28" y="0" fill="#d7d7d7"/><rect x="32" y="0" fill="#e0e0e0"/><rect x="44" y="0" fill="#e0ddd9"/><rect x="48" y="0" fill="#dbdce0"/><rect x="52" y="0" fill="#d6d6d6"/><rect x="56" y="0" fill="#d2d2d2"/><rect x="60" y="0" fill="#d5d5d5"/><rect x="72" y="0" fill="#e1ddda"/><rect x="76" y="0" fill="#e4e4e4"/><rect x="80" y="0" fill="#bbbec5"/><rect x="0" y="4" fill="#e2e2e2"/><rect x="8" y="4" fill="#d4cfcb"/><rect x="12" y="4" fill="#adb0b8"/><rect x="20" y="4" fill="#cacaca"/><rect x="24" y="4" fill="#ced0d5"/><rect x="28" y="4" fill="#dad6d2"/><rect x="32" y="4" fill="#dadada"/><rect x="36" y="4" fill="#c0c0c0"/><rect x="40" y="4" fill="#cdc8c2"/><rect x="48" y="4" fill="#caccd1"/><rect x="52" y="4" fill="#cdcdcd"/><rect x="56" y="4" fill="#bfbfbf"/><rect x="60" y="4" fill="#b0b0b0"/><rect x="64" y="4" fill="#e1e1e1"/><rect x="68" y="4" fill="#e0ddd9"/><rect x="72" y="4" fill="#c4c7cc"/><rect x="76" y="4" fill="#d4cfca"/></svg>
<svg class="a m" style="left:501px;top:452px" width="64" height="8"><rect x="0" y="0" fill="#adb0b8"/><rect x="4" y="0" fill="#e1e1e1"/><rect x="8" y="0" fill="#dbdbdb"/><rect x="20" y="0" fill="#d1d1d1"/><rect x="24" y="0" fill="#d8d8d8"/><rect x="28" y="0" fill="#dadada"/><rect x="32" y="0" fill="#c2c2c2"/><rect x="36" y="0" fill="#c9c9c9"/><rect x="40" y="0" fill="#ababab"/><rect x="44" y="0" fill="#e0e0e0"/><rect x="48" y="0" fill="#d1d1d1"/><rect x="52" y="0" fill="#dadcdf"/><rect x="56" y="0" fill="#d7d7d7"/><rect x="60" y="0" fill="#e3e0dc"/><rect x="0" y="4" fill="#dbd6d2"/><rect x="4" y="4" fill="#b3b6be"/><rect x="8" y="4" fill="#d6d6d6"/><rect x="16" y="4" fill="#d0d0d0"/><rect x="20" y="4" fill="#bebebe"/><rect x="24" y="4" fill="#dedad7"/><rect x="28" y="4" fill="#e4e4e4"/><rect x="36" y="4" fill="#d5d7db"/><rect x="40" y="4" fill="#d4d4d4"/><rect x="48" y="4" fill="#bcbfc6"/><rect x="52" y="4" fill="#c7c7c7"/><rect x="56" y="4" fill="#c8c8c8"/><rect x="60" y="4" fill="#b2b2b2"/></svg>
<svg class="a m" style="left:613px;top:452px" width="56" height="8"><rect x="0" y="0" fill="#d0d2d7"/><rect x="8" y="0" fill="#cccccc"/><rect x="12" y="0" fill="#e2e2e2"/><rect x="16" y="0" fill="#c0c3c9"/><rect x="20" y="0" fill="#9c9c9c"/><rect x="24" y="0" fill="#a1a1a1"/><rect x="28" y="0" fill="#ccc6c0"/><rect x="32" y="0" fill="#e1e1e1"/><rect x="36" y="0" fill="#d2d2d2"/><rect x="40" y="0" fill="#d9d9d9"/><rect x="44" y="0" fill="#d5d0cc"/><rect x="48" y="0" fill="#c9c2bc"/><rect x="52" y="0" fill="#e2e2e2"/><rect x="0" y="4" fill="#d3d3d3"/><rect x="4" y="4" fill="#b3b3b3"/><rect x="8" y="4" fill="#d7d7d7"/><rect x="16" y="4" fill="#dfdfdf"/><rect x="20" y="4" fill="#b9b9b9"/><rect x="24" y="4" fill="#e2dfdb"/><rect x="28" y="4" fill="#b8bbc2"/><rect x="32" y="4" fill="#9e9e9e"/><rect x="36" y="4" fill="#b4b4b4"/><rect x="40" y="4" fill="#d9d9d9"/><rect x="44" y="4" fill="#dbd6d2"/><rect x="48" y="4" fill="#a3a3a3"/><rect x="52" y="4" fill="#cfcfcf"/></svg>
<div class="a td" style="left:682.4px;top:452.5px">全日制</div>
<div class="a td" style="left:806px;top:452.5px">有</div>
<div class="a td" style="left:825px;top:452.5px">5天前</div>
<div class="a lnk" style="left:960.7px;top:447.6px;color:#3aa6e0">不符合调入专业</div>
<div class="a lnk" style="left:965.8px;top:458.3px;color:#3aa6e0">学科门类要求</div>
<svg class="a m" style="left:250px;top:497px" width="104" height="12"><rect x="12" y="0" fill="#d9effa"/><rect x="20" y="0" fill="#9ed6f2"/><rect x="24" y="0" fill="#e5f4fc"/><rect x="28" y="0" fill="#e2f3fb"/><rect x="32" y="0" fill="#ecf7fd"/><rect x="36" y="0" fill="#8ecff0"/><rect x="40" y="0" fill="#c9e8f8"/><rect x="56" y="0" fill="#c2e6f7"/><rect x="60" y="0" fill="#e0e8f6"/><rect x="68" y="0" fill="#ebf0fa"/><rect x="72" y="0" fill="#e8eef9"/><rect x="80" y="0" fill="#c6e7f8"/><rect x="84" y="0" fill="#dcf1fb"/><rect x="88" y="0" fill="#e3eaf7"/><rect x="92" y="0" fill="#d7eefa"/><rect x="96" y="0" fill="#e9f6fc"/><rect x="0" y="4" fill="#96d2f1"/><rect x="4" y="4" fill="#81c9ee"/><rect x="12" y="4" fill="#a3d7f3"/><rect x="16" y="4" fill="#9fd6f3"/><rect x="20" y="4" fill="#8ccef0"/><rect x="24" y="4" fill="#b2def5"/><rect x="28" y="4" fill="#8ccef0"/><rect x="32" y="4" fill="#d2edf9"/><rect x="36" y="4" fill="#9ed6f2"/><rect x="44" y="4" fill="#def2fb"/><rect x="48" y="4" fill="#b2def5"/><rect x="52" y="4" fill="#cfecf9"/><rect x="56" y="4" fill="#9dd5f2"/><rect x="68" y="4" fill="#c9e8f8"/><rect x="72" y="4" fill="#abdcf4"/><rect x="76" y="4" fill="#82caef"/><rect x="80" y="4" fill="#bee5f7"/><rect x="84" y="4" fill="#a5d9f3"/><rect x="88" y="4" fill="#cfebf9"/><rect x="92" y="4" fill="#d2edf9"/><rect x="96" y="4" fill="#c8e8f8"/><rect x="100" y="4" fill="#c7e8f8"/><rect x="12" y="8" fill="#a4d8f3"/><rect x="16" y="8" fill="#b0ddf5"/><rect x="20" y="8" fill="#e7f5fc"/><rect x="24" y="8" fill="#b4dff5"/><rect x="28" y="8" fill="#edf8fd"/><rect x="36" y="8" fill="#e2f3fb"/><rect x="40" y="8" fill="#e2f3fb"/><rect x="48" y="8" fill="#c9e8f8"/><rect x="52" y="8" fill="#e7f5fc"/><rect x="60" y="8" fill="#e8f5fc"/><rect x="72" y="8" fill="#daeffa"/><rect x="80" y="8" fill="#ddf0fb"/><rect x="88" y="8" fill="#edf8fd"/><rect x="100" y="8" fill="#d7e2f4"/></svg>
<svg class="a m" style="left:376px;top:497px" width="84" height="12"><rect x="0" y="0" fill="#d8d9dd"/><rect x="8" y="0" fill="#d6d1cc"/><rect x="12" y="0" fill="#e6e6e6"/><rect x="16" y="0" fill="#e0e0e0"/><rect x="20" y="0" fill="#ededed"/><rect x="24" y="0" fill="#d9d4d0"/><rect x="32" y="0" fill="#d4d4d4"/><rect x="36" y="0" fill="#d2d2d2"/><rect x="40" y="0" fill="#cbcbcb"/><rect x="44" y="0" fill="#dcd8d4"/><rect x="60" y="0" fill="#e1e1e1"/><rect x="64" y="0" fill="#e8e8e8"/><rect x="68" y="0" fill="#caccd2"/><rect x="80" y="0" fill="#dbd7d3"/><rect x="0" y="4" fill="#c1c1c1"/><rect x="4" y="4" fill="#c2c5cb"/><rect x="8" y="4" fill="#a6a6a6"/><rect x="12" y="4" fill="#c4c4c4"/><rect x="16" y="4" fill="#c8c8c8"/><rect x="20" y="4" fill="#d7d2cd"/><rect x="24" y="4" fill="#bfc2c8"/><rect x="28" y="4" fill="#d5d7db"/><rect x="32" y="4" fill="#d4d4d4"/><rect x="36" y="4" fill="#d2d2d2"/><rect x="40" y="4" fill="#bebebe"/><rect x="44" y="4" fill="#cac4be"/><rect x="48" y="4" fill="#ebebeb"/><rect x="56" y="4" fill="#d9d4d0"/><rect x="60" y="4" fill="#e1e1e1"/><rect x="64" y="4" fill="#d1d1d1"/><rect x="68" y="4" fill="#e9e9e9"/><rect x="72" y="4" fill="#bcbcbc"/><rect x="80" y="4" fill="#b5b8bf"/><rect x="4" y="8" fill="#e0e1e4"/><rect x="8" y="8" fill="#d4d6da"/><rect x="16" y="8" fill="#f0f0f0"/><rect x="28" y="8" fill="#e2e4e7"/><rect x="44" y="8" fill="#f2f0ef"/><rect x="48" y="8" fill="#ededed"/><rect x="60" y="8" fill="#dadada"/><rect x="64" y="8" fill="#dadada"/><rect x="68" y="8" fill="#efefef"/><rect x="72" y="8" fill="#dfdfdf"/><rect x="80" y="8" fill="#d6d8dc"/></svg>
<svg class="a m" style="left:497px;top:497px" width="68" height="12"><rect x="0" y="0" fill="#ececec"/><rect x="12" y="0" fill="#e6e6e6"/><rect x="16" y="0" fill="#e4e4e4"/><rect x="20" y="0" fill="#d5d5d5"/><rect x="28" y="0" fill="#c5c5c5"/><rect x="36" y="0" fill="#cfcfcf"/><rect x="48" y="0" fill="#d0d0d0"/><rect x="60" y="0" fill="#e4e0dd"/><rect x="64" y="0" fill="#e8e8e8"/><rect x="0" y="4" fill="#b4b4b4"/><rect x="4" y="4" fill="#cbcbcb"/><rect x="8" y="4" fill="#c2c4ca"/><rect x="12" y="4" fill="#d9d9d9"/><rect x="16" y="4" fill="#e4e4e4"/><rect x="20" y="4" fill="#bdbdbd"/><rect x="28" y="4" fill="#e1e1e1"/><rect x="32" y="4" fill="#d2d2d2"/><rect x="36" y="4" fill="#e0dcd8"/><rect x="40" y="4" fill="#dfdfdf"/><rect x="44" y="4" fill="#dfdfdf"/><rect x="48" y="4" fill="#afb2ba"/><rect x="56" y="4" fill="#d6d6d6"/><rect x="60" y="4" fill="#d0d0d0"/><rect x="4" y="8" fill="#e8e8e8"/><rect x="8" y="8" fill="#e8e8e8"/><rect x="12" y="8" fill="#d2d2d2"/><rect x="16" y="8" fill="#f5f5f5"/><rect x="20" y="8" fill="#ebebeb"/><rect x="28" y="8" fill="#efedeb"/><rect x="32" y="8" fill="#e3e3e3"/><rect x="40" y="8" fill="#d1d1d1"/><rect x="44" y="8" fill="#f0eeec"/><rect x="60" y="8" fill="#dfdfdf"/></svg>
<svg class="a m" style="left:613px;top:481px" width="60" height="12"><rect x="4" y="0" fill="#eeecea"/><rect x="8" y="0" fill="#d9d9d9"/><rect x="24" y="0" fill="#d3d3d3"/><rect x="28" y="0" fill="#e5e5e5"/><rect x="36" y="0" fill="#f2f2f2"/><rect x="44" y="0" fill="#c4c6cc"/><rect x="48" y="0" fill="#eaeaea"/><rect x="56" y="0" fill="#bfbfbf"/><rect x="0" y="4" fill="#dadada"/><rect x="4" y="4" fill="#b6b6b6"/><rect x="8" y="4" fill="#c7c7c7"/><rect x="12" y="4" fill="#ced0d5"/><rect x="16" y="4" fill="#c0c0c0"/><rect x="20" y="4" fill="#dfdfdf"/><rect x="28" y="4" fill="#c8c8c8"/><rect x="32" y="4" fill="#c1c1c1"/><rect x="36" y="4" fill="#c5c5c5"/><rect x="40" y="4" fill="#d7d3ce"/><rect x="44" y="4" fill="#b5b8c0"/><rect x="48" y="4" fill="#d4d4d4"/><rect x="52" y="4" fill="#e3e0dd"/><rect x="56" y="4" fill="#d5d5d5"/><rect x="4" y="8" fill="#dbdbdb"/><rect x="12" y="8" fill="#eae8e6"/><rect x="16" y="8" fill="#dcdcdc"/><rect x="40" y="8" fill="#e3e3e3"/><rect x="48" y="8" fill="#e3e3e3"/><rect x="52" y="8" fill="#e4e5e7"/></svg>
<svg class="a m" style="left:613px;top:497px" width="56" height="12"><rect x="8" y="0" fill="#e2e2e2"/><rect x="12" y="0" fill="#f1efee"/><rect x="16" y="0" fill="#e6e7e9"/><rect x="24" y="0" fill="#cecece"/><rect x="44" y="0" fill="#eeeeee"/><rect x="52" y="0" fill="#dddddd"/><rect x="4" y="4" fill="#e0e0e0"/><rect x="12" y="4" fill="#d5d7db"/><rect x="16" y="4" fill="#dfdfdf"/><rect x="24" y="4" fill="#c7c0ba"/><rect x="28" y="4" fill="#9d9d9d"/><rect x="32" y="4" fill="#dfdfdf"/><rect x="36" y="4" fill="#c3c3c3"/><rect x="40" y="4" fill="#c0c0c0"/><rect x="44" y="4" fill="#e3e3e3"/><rect x="48" y="4" fill="#e4e0dd"/><rect x="52" y="4" fill="#dcdcdc"/><rect x="0" y="8" fill="#d1d1d1"/><rect x="8" y="8" fill="#dddddd"/><rect x="12" y="8" fill="#dbd7d2"/><rect x="16" y="8" fill="#e7e4e2"/><rect x="24" y="8" fill="#e3e4e7"/><rect x="28" y="8" fill="#bcbcbc"/><rect x="36" y="8" fill="#cecece"/><rect x="44" y="8" fill="#e9e9e9"/><rect x="48" y="8" fill="#d8d3cf"/></svg>
<svg class="a m" style="left:613px;top:513px" width="16" height="12"><rect x="4" y="0" fill="#c8c8c8"/><rect x="8" y="0" fill="#d8d8d8"/><rect x="12" y="0" fill="#e0e0e0"/><rect x="0" y="4" fill="#ececec"/><rect x="4" y="4" fill="#d2d2d2"/><rect x="8" y="4" fill="#dbdbdb"/><rect x="12" y="4" fill="#b6b6b6"/><rect x="0" y="8" fill="#cbcdd2"/><rect x="12" y="8" fill="#f2f2f2"/></svg>
<div class="a td" style="left:682.4px;top:498.0px">全日制</div>
<div class="a td" style="left:806px;top:498.0px">有</div>
<div class="a td" style="left:825px;top:498.0px">5天前</div>
<div class="a lnk" style="left:960.7px;top:493.1px;color:#3aa6e0">不符合调入专业</div>
<div class="a lnk" style="left:965.8px;top:503.8px;color:#3aa6e0">学科门类要求</div>
<svg class="a m" style="left:250px;top:549px" width="108" height="12"><rect x="0" y="0" fill="#cceaf8"/><rect x="4" y="0" fill="#c9d7f0"/><rect x="8" y="0" fill="#e7f5fc"/><rect x="12" y="0" fill="#eef3fa"/><rect x="32" y="0" fill="#d5e0f4"/><rect x="36" y="0" fill="#f0f9fd"/><rect x="40" y="0" fill="#a7daf3"/><rect x="48" y="0" fill="#d5e0f4"/><rect x="52" y="0" fill="#e5ecf8"/><rect x="56" y="0" fill="#d5eefa"/><rect x="72" y="0" fill="#aedcf5"/><rect x="80" y="0" fill="#def2fb"/><rect x="88" y="0" fill="#a8daf4"/><rect x="96" y="0" fill="#e1f3fb"/><rect x="100" y="0" fill="#d2edf9"/><rect x="104" y="0" fill="#bbe3f6"/><rect x="0" y="4" fill="#b7e0f6"/><rect x="4" y="4" fill="#8dcff0"/><rect x="8" y="4" fill="#b2def5"/><rect x="12" y="4" fill="#70c2ec"/><rect x="16" y="4" fill="#95d2f1"/><rect x="20" y="4" fill="#b6c9eb"/><rect x="24" y="4" fill="#c1e5f7"/><rect x="28" y="4" fill="#cceaf8"/><rect x="32" y="4" fill="#cad8f0"/><rect x="36" y="4" fill="#93d1f1"/><rect x="40" y="4" fill="#c2e6f7"/><rect x="44" y="4" fill="#9fd7f3"/><rect x="52" y="4" fill="#c3d3ee"/><rect x="56" y="4" fill="#b2dff5"/><rect x="64" y="4" fill="#c7d6f0"/><rect x="68" y="4" fill="#95d2f1"/><rect x="72" y="4" fill="#d1ecf9"/><rect x="76" y="4" fill="#a1d7f3"/><rect x="80" y="4" fill="#73c3ed"/><rect x="84" y="4" fill="#afddf5"/><rect x="88" y="4" fill="#a1d8f3"/><rect x="92" y="4" fill="#69bfeb"/><rect x="96" y="4" fill="#c3e7f7"/><rect x="100" y="4" fill="#aeddf4"/><rect x="104" y="4" fill="#acdcf4"/><rect x="0" y="8" fill="#d9effa"/><rect x="4" y="8" fill="#d4edf9"/><rect x="16" y="8" fill="#dce5f5"/><rect x="20" y="8" fill="#bee4f6"/><rect x="36" y="8" fill="#dde6f6"/><rect x="40" y="8" fill="#dbf1fa"/><rect x="48" y="8" fill="#b5dff5"/><rect x="56" y="8" fill="#d2def3"/><rect x="72" y="8" fill="#ceebf9"/><rect x="76" y="8" fill="#edf8fd"/><rect x="80" y="8" fill="#cbe9f8"/><rect x="84" y="8" fill="#d9e3f4"/><rect x="104" y="8" fill="#8fcff0"/></svg>
<svg class="a m" style="left:376px;top:541px" width="116" height="12"><rect x="4" y="0" fill="#d7d7d7"/><rect x="24" y="0" fill="#e8e5e3"/><rect x="28" y="0" fill="#d2d2d2"/><rect x="32" y="0" fill="#e9e9e9"/><rect x="40" y="0" fill="#f3f3f3"/><rect x="44" y="0" fill="#c9cbd1"/><rect x="48" y="0" fill="#e2e2e2"/><rect x="60" y="0" fill="#ededef"/><rect x="68" y="0" fill="#dcd8d4"/><rect x="80" y="0" fill="#dcdcdc"/><rect x="84" y="0" fill="#d7d3ce"/><rect x="88" y="0" fill="#c8c8c8"/><rect x="92" y="0" fill="#e8e5e2"/><rect x="96" y="0" fill="#dedede"/><rect x="100" y="0" fill="#d4d6da"/><rect x="104" y="0" fill="#d2d2d2"/><rect x="112" y="0" fill="#e6e6e6"/><rect x="0" y="4" fill="#d6d6d6"/><rect x="4" y="4" fill="#cdcdcd"/><rect x="12" y="4" fill="#bababa"/><rect x="16" y="4" fill="#d6d6d6"/><rect x="20" y="4" fill="#b2b5bd"/><rect x="24" y="4" fill="#c6c6c6"/><rect x="28" y="4" fill="#bfbfbf"/><rect x="32" y="4" fill="#aeb1b9"/><rect x="40" y="4" fill="#e1e1e1"/><rect x="44" y="4" fill="#dddddd"/><rect x="48" y="4" fill="#b7b7b7"/><rect x="56" y="4" fill="#d6d6d6"/><rect x="60" y="4" fill="#d2d4d9"/><rect x="64" y="4" fill="#e2e2e2"/><rect x="68" y="4" fill="#dcdcdc"/><rect x="72" y="4" fill="#bfbfbf"/><rect x="80" y="4" fill="#c1c1c1"/><rect x="88" y="4" fill="#d2d2d2"/><rect x="92" y="4" fill="#d3cec8"/><rect x="96" y="4" fill="#a1a1a1"/><rect x="100" y="4" fill="#d8d8d8"/><rect x="104" y="4" fill="#d0cbc6"/><rect x="108" y="4" fill="#dfdfdf"/><rect x="112" y="4" fill="#e8e8e8"/><rect x="0" y="8" fill="#eeeeee"/><rect x="4" y="8" fill="#bfbfbf"/><rect x="12" y="8" fill="#dbd7d3"/><rect x="16" y="8" fill="#d5d5d5"/><rect x="24" y="8" fill="#c3c3c3"/><rect x="28" y="8" fill="#e0e0e0"/><rect x="32" y="8" fill="#eeeff1"/><rect x="40" y="8" fill="#e6e6e6"/><rect x="44" y="8" fill="#d4d4d4"/><rect x="48" y="8" fill="#bfbfbf"/><rect x="56" y="8" fill="#e9eaec"/><rect x="64" y="8" fill="#dfdfdf"/><rect x="68" y="8" fill="#ededed"/><rect x="72" y="8" fill="#ccced3"/><rect x="76" y="8" fill="#d5d7db"/><rect x="88" y="8" fill="#f0f0f0"/><rect x="92" y="8" fill="#d9d9d9"/><rect x="100" y="8" fill="#e3e3e3"/><rect x="112" y="8" fill="#cacaca"/></svg>
<svg class="a m" style="left:375px;top:556px" width="12" height="8"><rect x="0" y="0" fill="#dadada"/><rect x="4" y="0" fill="#a4a4a4"/><rect x="0" y="4" fill="#d9d9d9"/><rect x="4" y="4" fill="#cecece"/><rect x="8" y="4" fill="#d6d6d6"/></svg>
<svg class="a m" style="left:493px;top:549px" width="72" height="12"><rect x="4" y="0" fill="#eaeaea"/><rect x="8" y="0" fill="#ebebeb"/><rect x="12" y="0" fill="#f6f6f6"/><rect x="20" y="0" fill="#d6d1cd"/><rect x="24" y="0" fill="#dbdde0"/><rect x="28" y="0" fill="#d2d2d2"/><rect x="40" y="0" fill="#f0f0f0"/><rect x="56" y="0" fill="#ececec"/><rect x="60" y="0" fill="#d1d1d1"/><rect x="68" y="0" fill="#e5e5e5"/><rect x="4" y="4" fill="#b0b0b0"/><rect x="8" y="4" fill="#e5e2df"/><rect x="12" y="4" fill="#d2d2d2"/><rect x="16" y="4" fill="#d5d0cb"/><rect x="24" y="4" fill="#c5c5c5"/><rect x="28" y="4" fill="#bdbdbd"/><rect x="32" y="4" fill="#e7e7e7"/><rect x="36" y="4" fill="#e1deda"/><rect x="40" y="4" fill="#d6d6d6"/><rect x="56" y="4" fill="#dedad6"/><rect x="60" y="4" fill="#d2cdc8"/><rect x="8" y="8" fill="#d1d1d1"/><rect x="12" y="8" fill="#e6e6e6"/><rect x="16" y="8" fill="#d3d5d9"/><rect x="20" y="8" fill="#f0f0f0"/><rect x="36" y="8" fill="#e6e6e6"/><rect x="40" y="8" fill="#e1e1e1"/><rect x="56" y="8" fill="#dcd8d4"/><rect x="64" y="8" fill="#c1c1c1"/><rect x="68" y="8" fill="#f0eeec"/></svg>
<svg class="a m" style="left:613px;top:548px" width="60" height="12"><rect x="0" y="0" fill="#dadada"/><rect x="8" y="0" fill="#ebebeb"/><rect x="16" y="0" fill="#cbcbcb"/><rect x="28" y="0" fill="#e7e7e7"/><rect x="32" y="0" fill="#dadada"/><rect x="52" y="0" fill="#e7e7e7"/><rect x="0" y="4" fill="#e9e9e9"/><rect x="4" y="4" fill="#dedede"/><rect x="16" y="4" fill="#e5e5e5"/><rect x="28" y="4" fill="#c9c9c9"/><rect x="32" y="4" fill="#b6b6b6"/><rect x="36" y="4" fill="#c7c7c7"/><rect x="44" y="4" fill="#d1d1d1"/><rect x="52" y="4" fill="#c5c5c5"/><rect x="56" y="4" fill="#d2d2d2"/><rect x="12" y="8" fill="#c7c7c7"/><rect x="16" y="8" fill="#cccccc"/><rect x="28" y="8" fill="#f4f4f4"/><rect x="32" y="8" fill="#e4e4e4"/><rect x="36" y="8" fill="#c3c3c3"/><rect x="44" y="8" fill="#f4f2f1"/><rect x="52" y="8" fill="#e2dedb"/><rect x="56" y="8" fill="#e7e7e7"/></svg>
<div class="a td" style="left:682.4px;top:549.5px">全日制</div>
<div class="a td" style="left:806px;top:549.5px">有</div>
<div class="a td" style="left:825px;top:549.5px">5天前</div>
<div class="a lnk" style="left:918px;top:549.5px">查看</div>
<div class="btn" style="left:974px;top:544.5px;width:40px;height:19px">申请</div>
<svg class="a m" style="left:246px;top:590px" width="112" height="12"><rect x="4" y="0" fill="#eaf7fc"/><rect x="12" y="0" fill="#a2d7f3"/><rect x="16" y="0" fill="#c5e6f7"/><rect x="20" y="0" fill="#b6e0f6"/><rect x="24" y="0" fill="#f1f5fb"/><rect x="28" y="0" fill="#daf0fa"/><rect x="32" y="0" fill="#bae1f6"/><rect x="48" y="0" fill="#ccdaf1"/><rect x="60" y="0" fill="#ebf7fd"/><rect x="68" y="0" fill="#e0f3fb"/><rect x="88" y="0" fill="#ccebf9"/><rect x="96" y="0" fill="#9cd5f2"/><rect x="100" y="0" fill="#e4f4fc"/><rect x="104" y="0" fill="#e0e8f7"/><rect x="108" y="0" fill="#e5ecf8"/><rect x="0" y="4" fill="#cdebf9"/><rect x="4" y="4" fill="#b5e0f5"/><rect x="8" y="4" fill="#85cbef"/><rect x="12" y="4" fill="#b5e0f5"/><rect x="16" y="4" fill="#cceaf8"/><rect x="20" y="4" fill="#ccdaf1"/><rect x="24" y="4" fill="#6ec1ec"/><rect x="28" y="4" fill="#bce3f6"/><rect x="32" y="4" fill="#e0f3fb"/><rect x="36" y="4" fill="#94d1f1"/><rect x="44" y="4" fill="#b6e2f6"/><rect x="52" y="4" fill="#c9e9f8"/><rect x="56" y="4" fill="#89cdf0"/><rect x="60" y="4" fill="#c2e6f7"/><rect x="64" y="4" fill="#93d1f1"/><rect x="68" y="4" fill="#b2dff5"/><rect x="80" y="4" fill="#82caef"/><rect x="84" y="4" fill="#bde3f6"/><rect x="88" y="4" fill="#d1edf9"/><rect x="92" y="4" fill="#6fc2ec"/><rect x="96" y="4" fill="#bfe5f7"/><rect x="100" y="4" fill="#9fd7f3"/><rect x="104" y="4" fill="#9cd5f2"/><rect x="108" y="4" fill="#85cbef"/><rect x="0" y="8" fill="#c2e5f7"/><rect x="12" y="8" fill="#d6e1f4"/><rect x="20" y="8" fill="#dbf0fa"/><rect x="24" y="8" fill="#cbe9f8"/><rect x="28" y="8" fill="#9bd4f2"/><rect x="32" y="8" fill="#e9f5fc"/><rect x="40" y="8" fill="#ceeaf9"/><rect x="48" y="8" fill="#a9daf4"/><rect x="52" y="8" fill="#eaf6fc"/><rect x="60" y="8" fill="#d5edfa"/><rect x="68" y="8" fill="#e0f2fb"/><rect x="80" y="8" fill="#e0f2fb"/><rect x="88" y="8" fill="#eaeff9"/><rect x="92" y="8" fill="#d5eefa"/><rect x="96" y="8" fill="#bae1f6"/><rect x="108" y="8" fill="#e5f4fc"/></svg>
<svg class="a m" style="left:375px;top:590px" width="88" height="12"><rect x="0" y="0" fill="#d1d3d8"/><rect x="12" y="0" fill="#d2d2d2"/><rect x="24" y="0" fill="#eae8e5"/><rect x="28" y="0" fill="#d3d3d3"/><rect x="32" y="0" fill="#e2e2e2"/><rect x="40" y="0" fill="#e9e9e9"/><rect x="56" y="0" fill="#e1e1e1"/><rect x="68" y="0" fill="#e2e2e2"/><rect x="76" y="0" fill="#dddddd"/><rect x="0" y="4" fill="#d3d3d3"/><rect x="4" y="4" fill="#dedede"/><rect x="8" y="4" fill="#d6d2cd"/><rect x="12" y="4" fill="#b9bcc3"/><rect x="16" y="4" fill="#c2c2c2"/><rect x="20" y="4" fill="#e9e9e9"/><rect x="28" y="4" fill="#d6d7dc"/><rect x="32" y="4" fill="#c5c8cd"/><rect x="40" y="4" fill="#c9c3bd"/><rect x="44" y="4" fill="#bcbcbc"/><rect x="48" y="4" fill="#cfc9c4"/><rect x="52" y="4" fill="#e3e3e3"/><rect x="56" y="4" fill="#bbbec5"/><rect x="68" y="4" fill="#dddddd"/><rect x="76" y="4" fill="#d7d7d7"/><rect x="80" y="4" fill="#cdcdcd"/><rect x="84" y="4" fill="#b6b6b6"/><rect x="4" y="8" fill="#e1e1e1"/><rect x="8" y="8" fill="#c6c8ce"/><rect x="12" y="8" fill="#e4e4e4"/><rect x="16" y="8" fill="#d1d1d1"/><rect x="20" y="8" fill="#e0e0e0"/><rect x="28" y="8" fill="#e2e2e2"/><rect x="36" y="8" fill="#dbd7d3"/><rect x="44" y="8" fill="#e3e3e3"/><rect x="48" y="8" fill="#dad6d2"/><rect x="56" y="8" fill="#cecece"/><rect x="60" y="8" fill="#f3f3f3"/><rect x="64" y="8" fill="#d5d5d5"/><rect x="76" y="8" fill="#d4d4d4"/><rect x="80" y="8" fill="#eeeeee"/></svg>
<svg class="a m" style="left:493px;top:590px" width="72" height="12"><rect x="8" y="0" fill="#eeeeee"/><rect x="12" y="0" fill="#cbcbcb"/><rect x="16" y="0" fill="#d7d2ce"/><rect x="20" y="0" fill="#c8cacf"/><rect x="24" y="0" fill="#dfdfdf"/><rect x="28" y="0" fill="#cfcfcf"/><rect x="32" y="0" fill="#dadada"/><rect x="48" y="0" fill="#e1e1e1"/><rect x="52" y="0" fill="#d3d3d3"/><rect x="60" y="0" fill="#ededed"/><rect x="64" y="0" fill="#ebe9e6"/><rect x="68" y="0" fill="#e0e0e0"/><rect x="0" y="4" fill="#c9c9c9"/><rect x="8" y="4" fill="#afb2ba"/><rect x="12" y="4" fill="#b3b6be"/><rect x="20" y="4" fill="#e6e4e1"/><rect x="24" y="4" fill="#d2d4d8"/><rect x="28" y="4" fill="#c6bfb9"/><rect x="32" y="4" fill="#bcbfc5"/><rect x="40" y="4" fill="#d8d3cf"/><rect x="44" y="4" fill="#aeaeae"/><rect x="48" y="4" fill="#cbc4be"/><rect x="52" y="4" fill="#dfdbd8"/><rect x="56" y="4" fill="#e3e3e3"/><rect x="60" y="4" fill="#d0d0d0"/><rect x="64" y="4" fill="#b1b1b1"/><rect x="68" y="4" fill="#dddddd"/><rect x="0" y="8" fill="#dbdbdb"/><rect x="8" y="8" fill="#f0f0f0"/><rect x="12" y="8" fill="#dfe1e4"/><rect x="16" y="8" fill="#e5e5e5"/><rect x="20" y="8" fill="#d0d0d0"/><rect x="24" y="8" fill="#dadada"/><rect x="40" y="8" fill="#cacaca"/><rect x="44" y="8" fill="#c7c9cf"/><rect x="56" y="8" fill="#efefef"/><rect x="60" y="8" fill="#ebebeb"/></svg>
<svg class="a m" style="left:613px;top:582px" width="60" height="12"><rect x="8" y="0" fill="#f1f1f1"/><rect x="12" y="0" fill="#ebebeb"/><rect x="16" y="0" fill="#e9e9e9"/><rect x="20" y="0" fill="#e9e9e9"/><rect x="28" y="0" fill="#d4d5da"/><rect x="36" y="0" fill="#e6e6e6"/><rect x="44" y="0" fill="#eeeeee"/><rect x="8" y="4" fill="#c6c6c6"/><rect x="12" y="4" fill="#b3b6be"/><rect x="16" y="4" fill="#d2d2d2"/><rect x="20" y="4" fill="#c5c7cd"/><rect x="24" y="4" fill="#cccccc"/><rect x="28" y="4" fill="#c0c0c0"/><rect x="32" y="4" fill="#e2e2e2"/><rect x="36" y="4" fill="#d8d8d8"/><rect x="40" y="4" fill="#c5c8cd"/><rect x="44" y="4" fill="#e5e2df"/><rect x="48" y="4" fill="#d5d0cc"/><rect x="52" y="4" fill="#e1e1e1"/><rect x="56" y="4" fill="#e1dedb"/><rect x="0" y="8" fill="#dedad6"/><rect x="8" y="8" fill="#d7d7d7"/><rect x="12" y="8" fill="#dddddd"/><rect x="16" y="8" fill="#e9eaec"/><rect x="20" y="8" fill="#e4e4e4"/><rect x="28" y="8" fill="#c5c7cd"/><rect x="36" y="8" fill="#e3e3e3"/><rect x="40" y="8" fill="#eff0f1"/><rect x="44" y="8" fill="#d8d3cf"/><rect x="48" y="8" fill="#f0f0f0"/><rect x="52" y="8" fill="#dfdfdf"/></svg>
<svg class="a m" style="left:613px;top:601px" width="28" height="8"><rect x="0" y="0" fill="#d2d2d2"/><rect x="8" y="0" fill="#dbdbdb"/><rect x="12" y="0" fill="#c9c9c9"/><rect x="20" y="0" fill="#9d9d9d"/><rect x="24" y="0" fill="#b6b6b6"/><rect x="0" y="4" fill="#d7d7d7"/><rect x="8" y="4" fill="#d8d8d8"/><rect x="16" y="4" fill="#cecece"/></svg>
<div class="a td" style="left:682.4px;top:592.0px">全日制</div>
<div class="a td" style="left:806px;top:592.0px">有</div>
<div class="a td" style="left:825px;top:592.0px">5天前</div>
<div class="a lnk" style="left:960.7px;top:587.1px;color:#3aa6e0">不符合调入专业</div>
<div class="a lnk" style="left:965.8px;top:597.8px;color:#3aa6e0">学科门类要求</div>

<!-- sidebar -->
<div class="a" style="left:1046px;top:127px;width:31px;height:49px;border:1px solid #e3e3e3;border-radius:4px;background:#fff"></div>
<svg class="a" style="left:1053px;top:132px" width="20" height="20" viewBox="0 0 20 20">
  <circle cx="10" cy="9.8" r="9.3" fill="#19a89c"/>
  <path d="M2.5,14.5 Q5,11 8,11.5 L12,11.5 Q15.5,11 17.5,14.5 Q14,19.3 10,19.2 Q6,19.3 2.5,14.5Z" fill="#1b2b25"/>
  <path d="M6.8,8.5 Q7,5.5 10,5.5 Q13,5.5 13.2,8.5 L13.5,13 Q12.5,16.5 10,16.5 Q7.5,16.5 6.5,13 Z" fill="#f0cf1c"/>
  <path d="M6.5,12 L4.5,14.5 L6.5,14 Z M13.5,12 L15.5,14.5 L13.5,14Z" fill="#f0cf1c"/>
  <circle cx="8.8" cy="9.3" r="0.8" fill="#222"/><circle cx="11.2" cy="9.3" r="0.8" fill="#222"/>
  <path d="M9.1,10.8 L10.9,10.8 L10,12Z" fill="#d9780f"/>
  <polygon points="4.5,5.2 10.5,3 16,5.8 10,7.6" fill="#111"/>
  <rect x="7.5" y="5.6" width="5" height="2.2" fill="#111"/>
</svg>
<div class="a" style="left:1054px;top:155px;font-size:8px;letter-spacing:0.6px;line-height:9px;color:#8a8a8a">学信</div>
<div class="a" style="left:1050px;top:166px;font-size:8px;letter-spacing:0.5px;line-height:9px;color:#8a8a8a">机器人</div>
<div class="a" style="left:1046px;top:181px;width:31px;height:32px;border:1px solid #e3e3e3;border-radius:4px;background:#fff"></div>
<svg class="a" style="left:1053px;top:189px" width="19" height="19" viewBox="0 0 19 19">
  <g fill="none" stroke="#333" stroke-width="1.6">
    <rect x="1.5" y="1.5" width="6.2" height="6.2"/>
    <rect x="10.5" y="1.5" width="6.2" height="6.2"/>
    <rect x="1.5" y="10.5" width="6.2" height="6.2"/>
  </g>
  <rect x="3.8" y="3.8" width="1.6" height="1.6" fill="#333"/>
  <rect x="12.8" y="3.8" width="1.6" height="1.6" fill="#333"/>
  <rect x="3.8" y="12.8" width="1.6" height="1.6" fill="#333"/>
  <rect x="9.8" y="9.8" width="1.8" height="8" fill="#333"/>
  <rect x="9.8" y="9.8" width="4.5" height="3.5" fill="#333"/>
  <rect x="15.6" y="9.8" width="1.8" height="5" fill="#333"/>
  <rect x="12.6" y="13" width="1.8" height="2" fill="#333"/>
  <rect x="12.6" y="16" width="1.6" height="1.6" fill="#333"/>
  <rect x="15.6" y="16" width="1.6" height="1.6" fill="#333"/>
</svg>

</body></html>
